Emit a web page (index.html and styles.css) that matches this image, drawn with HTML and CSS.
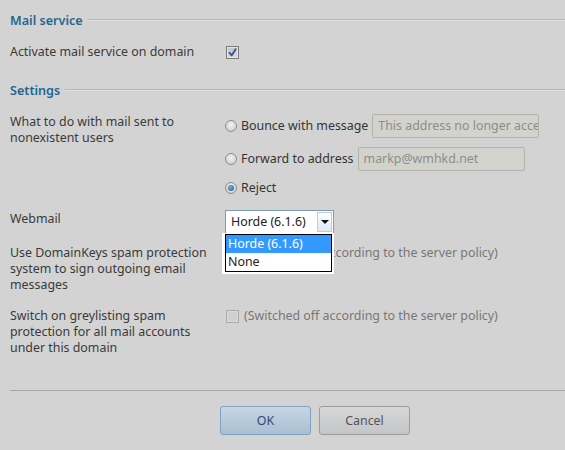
FILE: index.html
```html
<!DOCTYPE html>
<html lang="en">
<head>
<meta charset="utf-8">
<title>Mail settings</title>
<link rel="stylesheet" href="styles.css">
</head>
<body>
<div class="page">
  <div class="legend legend-mail">
    <span class="legend-title">Mail service</span><span class="legend-line"></span>
  </div>

  <div class="row row-activate">
    <div class="label">Activate mail service on domain</div>
    <div class="field">
      <span class="checkbox checked">
        <svg width="9" height="9" viewBox="0 0 9 9"><path d="M1.5 4.8 L3.6 7.4 L7.6 1.2" fill="none" stroke="#2f4f9f" stroke-width="1.8" stroke-linecap="round" stroke-linejoin="round"/></svg>
      </span>
    </div>
  </div>

  <div class="legend legend-settings">
    <span class="legend-title">Settings</span><span class="legend-line"></span>
  </div>

  <div class="row row-nonexistent">
    <div class="label">What to do with mail sent to nonexistent users</div>
    <div class="field options">
      <div class="option opt-bounce">
        <span class="radio"></span><span class="opt-text">Bounce with message</span>
        <span class="textbox tb-bounce">This address no longer accepts mail.</span>
      </div>
      <div class="option opt-forward">
        <span class="radio"></span><span class="opt-text">Forward to address</span>
        <span class="textbox tb-forward">markp@wmhkd.net</span>
      </div>
      <div class="option opt-reject">
        <span class="radio selected"></span><span class="opt-text">Reject</span>
      </div>
    </div>
  </div>

  <div class="row row-webmail">
    <div class="label">Webmail</div>
    <div class="field">
      <div class="select">
        <span class="select-value">Horde (6.1.6)</span>
        <span class="select-arrow"><span class="triangle"></span></span>
        <div class="dropdown">
          <div class="dropdown-list">
            <div class="dropdown-item active">Horde (6.1.6)</div>
            <div class="dropdown-item">None</div>
          </div>
        </div>
      </div>
    </div>
  </div>

  <div class="row row-domainkeys">
    <div class="label">Use DomainKeys spam protection system to sign outgoing email messages</div>
    <div class="field inline">
      <span class="checkbox disabled"></span><span class="note">(Switched off according to the server policy)</span>
    </div>
  </div>

  <div class="row row-greylist">
    <div class="label">Switch on greylisting spam protection for all mail accounts under this domain</div>
    <div class="field inline">
      <span class="checkbox disabled"></span><span class="note">(Switched off according to the server policy)</span>
    </div>
  </div>

  <div class="separator"></div>

  <div class="buttons">
    <button class="btn btn-ok" type="button">OK</button>
    <button class="btn btn-cancel" type="button">Cancel</button>
  </div>
</div>
</body>
</html>
```

FILE: styles.css
```css
html, body {
  margin: 0;
  padding: 0;
  background: #d3d3d3;
}
body {
  font-family: "Noto Sans", "Open Sans", sans-serif;
  font-size: 12.4px;
  color: #3a3a3a;
  line-height: 16px;
}
.page {
  padding-left: 10px;
  width: 555px;
}

/* legends */
.legend {
  display: flex;
  align-items: center;
  height: 16px;
}
.legend-title {
  color: #236690;
  font-size: 12.6px;
  font-weight: 600;
  padding-right: 5px;
  white-space: nowrap;
}
.legend-line {
  flex: 1;
  height: 0;
  border-top: 1px solid #b6b6b6;
  border-bottom: 1px solid #e0e0e0;
  margin-top: -2px;
}
.legend-mail { margin-top: 13px; }
.legend-settings { margin-top: 23px; }

/* rows */
.row {
  display: grid;
  grid-template-columns: 215px 1fr;
  align-items: start;
}
.label {
  padding-right: 8px;
}
.row-activate { margin-top: 15px; }
.row-nonexistent { margin-top: 15px; }
.row-webmail { margin-top: 10px; }
.row-domainkeys { margin-top: 11px; }
.row-greylist { margin-top: 15px; }

.row-activate .field {
  display: flex;
  align-items: center;
  height: 16px;
  padding-left: 1px;
}
.row-webmail .label { padding-top: 1px; }

/* checkbox */
.checkbox {
  display: inline-flex;
  align-items: center;
  justify-content: center;
  box-sizing: border-box;
  width: 13px;
  height: 13px;
  border: 1px solid #7c7c7c;
  background: linear-gradient(#c4c4c4, #dadada);
  box-shadow: inset 0 0 0 1px #e4e4e4;
}
.checkbox.disabled {
  border-color: #aaaaaa;
  background: #d0d0d0;
  box-shadow: inset 0 0 0 1px #dcdcdc;
}

/* options */
.options {
  display: flex;
  flex-direction: column;
}
.option {
  display: flex;
  align-items: center;
  height: 24px;
  color: #333;
}
.opt-bounce { margin-bottom: 9px; }
.opt-forward { margin-bottom: 5px; }
.radio {
  box-sizing: border-box;
  width: 12px;
  height: 12px;
  border-radius: 50%;
  border: 1px solid #8d8d8d;
  background: radial-gradient(circle at 50% 40%, #f2f2f2, #c8c8c8);
  margin-right: 4px;
  flex: none;
  display: flex;
  align-items: center;
  justify-content: center;
}
.radio.selected::after {
  content: "";
  width: 6px;
  height: 6px;
  border-radius: 50%;
  background: radial-gradient(circle at 40% 35%, #6fb0dc, #1c5d8c);
}
.textbox {
  box-sizing: border-box;
  height: 24px;
  margin-left: 4px;
  padding: 0 5px;
  border: 1px solid #b3b3ab;
  border-radius: 2px;
  background: #d3d3cd;
  color: #8d8d8d;
  white-space: nowrap;
  overflow: hidden;
  display: flex;
  align-items: center;
}
.tb-bounce { width: 167px; }
.tb-forward { width: 167px; }

/* select */
.select {
  position: relative;
  box-sizing: border-box;
  width: 109px;
  height: 24px;
  border: 1px solid #7f9db9;
  background: #fff;
  color: #222;
  display: flex;
  align-items: center;
  padding-left: 5px;
}
.select-arrow {
  position: absolute;
  right: 1px;
  top: 1px;
  bottom: 1px;
  width: 15px;
  box-sizing: border-box;
  border: 1px solid #b8cde6;
  background: linear-gradient(#ffffff, #dfe8f4);
  display: flex;
  align-items: center;
  justify-content: center;
}
.triangle {
  width: 0;
  height: 0;
  border-left: 4px solid transparent;
  border-right: 4px solid transparent;
  border-top: 4px solid #111;
}
.dropdown {
  position: absolute;
  top: 22px;
  left: -4px;
  padding: 1px 2px 2px 3px;
  background: #fff;
  z-index: 2;
}
.dropdown-list {
  width: 105px;
  border: 1px solid #000;
  background: #fff;
}
.dropdown-item {
  height: 18px;
  line-height: 18px;
  padding-left: 2px;
  color: #222;
}
.dropdown-item.active {
  background: #3399ff;
  color: #fff;
}

/* inline fields */
.field.inline {
  display: flex;
  align-items: center;
  height: 16px;
  padding-left: 1px;
}
.note {
  margin-left: 5px;
  color: #777;
  white-space: nowrap;
}

/* separator & buttons */
.separator {
  margin-top: 34px;
  border-top: 1px solid #a6a6a6;
}
.buttons {
  margin-top: 15px;
  padding-left: 210px;
  display: flex;
  gap: 8px;
}
.btn {
  box-sizing: border-box;
  width: 91px;
  height: 29px;
  border-radius: 3px;
  font-family: "Noto Sans", "Open Sans", sans-serif;
  font-size: 12.4px;
  cursor: pointer;
}
.btn-ok {
  border: 1px solid #7fa2c2;
  background: linear-gradient(#c7d6e3, #a8bfd3);
  color: #2c4a6e;
}
.btn-cancel {
  border: 1px solid #9c9c9c;
  background: linear-gradient(#d6d7d8, #c3c5c7);
  color: #555;
}
```
